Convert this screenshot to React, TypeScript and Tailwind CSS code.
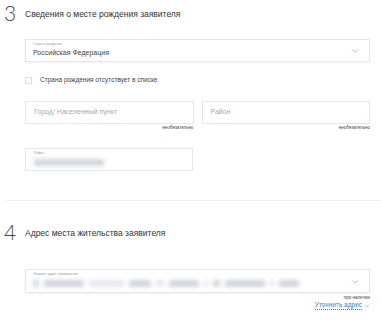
import { ChevronDown } from "lucide-react";

const font = { fontFamily: '"Liberation Sans", Arial, sans-serif' };
const thin = { fontFamily: 'Lato, "DejaVu Sans", sans-serif' };

const Blur = ({ w, shade = "bg-gray-300" }: { w: number; shade?: string }) => (
  <span className={`inline-block h-[7px] blur-[2px] ${shade}`} style={{ width: w }} />
);

export default function App() {
  return (
    <div className="w-[381px] h-[320px] bg-white overflow-hidden text-[#222]" style={font}>
      {/* секция 3 */}
      <div className="flex items-start pt-[2px] pl-[4px]">
        <span className="w-[21px] text-[21px] leading-[21px] font-light text-[#444]" style={thin}>3</span>
        <span className="mt-[7px] text-[8.5px] leading-[10px] text-[#333]">Сведения о месте рождения заявителя</span>
      </div>

      <div className="pl-[25px] pr-[11px] mt-[16px]">
        {/* страна рождения */}
        <div className="relative h-[23px] border border-[#e6e6e6] shadow-[0_1px_2px_rgba(0,0,0,0.06)] pl-[7px] pt-[2px]">
          <div className="text-[3.5px] leading-[5px] text-[#999]">Страна рождения</div>
          <div className="text-[7px] leading-[10px] mt-[1px] text-[#444]">Российская Федерация</div>
          <ChevronDown className="absolute right-[9px] top-[6px] w-[10px] h-[10px] text-[#999]" strokeWidth={1.5} />
        </div>

        {/* чекбокс */}
        <div className="flex items-center mt-[14px] h-[8px]">
          <span className="w-[7px] h-[7px] border border-[#ddd] bg-white" />
          <span className="ml-[8px] text-[6.5px] leading-[8px] text-[#444]">Страна рождения отсутствует в списке</span>
        </div>

        {/* город / район */}
        <div className="grid grid-cols-2 gap-[8px] mt-[17px]">
          <div>
            <div className="h-[23px] border border-[#e6e6e6] flex items-center pl-[8px] text-[7px] text-[#aaa]">
              Город/ Населенный пункт
            </div>
            <div className="text-right text-[4.5px] leading-[6px] mt-[1px] text-[#444]">необязательно</div>
          </div>
          <div>
            <div className="h-[23px] border border-[#e6e6e6] flex items-center pl-[8px] text-[7px] text-[#aaa]">
              Район
            </div>
            <div className="text-right text-[4.5px] leading-[6px] mt-[1px] text-[#444]">необязательно</div>
          </div>
        </div>

        {/* район (заполненный) */}
        <div className="w-[168px] h-[23px] border border-[#e6e6e6] mt-[17px] pl-[8px] pt-[2px]">
          <div className="text-[3.5px] leading-[5px] text-[#999]">Район</div>
          <div className="flex items-center mt-[3px]">
            <Blur w={70} shade="bg-gray-300" />
          </div>
        </div>
      </div>

      <div className="mt-[29px] ml-[5px] h-px bg-[#f0f0f0]" />

      {/* секция 4 */}
      <div className="flex items-start pt-[20px] pl-[4px]">
        <span className="w-[21px] text-[21px] leading-[21px] font-light text-[#444]" style={thin}>4</span>
        <span className="mt-[7px] text-[8.5px] leading-[10px] text-[#333]">Адрес места жительства заявителя</span>
      </div>

      <div className="pl-[25px] pr-[11px] mt-[27px]">
        <div className="relative h-[24px] border border-[#e6e6e6] shadow-[0_1px_2px_rgba(0,0,0,0.06)] pl-[7px] pt-[2px]">
          <div className="text-[3.5px] leading-[5px] text-[#999]">Укажите адрес проживания</div>
          <div className="flex items-center gap-[5px] mt-[3px]">
            <Blur w={6} />
            <Blur w={40} />
            <Blur w={35} shade="bg-gray-200" />
            <Blur w={22} shade="bg-gray-300" />
            <Blur w={8} shade="bg-gray-200" />
            <Blur w={30} />
            <Blur w={4} shade="bg-gray-200" />
            <Blur w={7} />
            <Blur w={40} />
            <Blur w={4} shade="bg-gray-200" />
            <Blur w={20} />
          </div>
          <ChevronDown className="absolute right-[9px] top-[7px] w-[10px] h-[10px] text-[#999]" strokeWidth={1.5} />
        </div>
        <div className="text-right text-[4.5px] leading-[6px] mt-[2px] text-[#444]">при наличии</div>
        <div className="flex justify-end items-center gap-[2px] text-[6.5px] leading-[8px] text-[#3a7fc4]">
          <span className="border-b border-dotted border-[#3a7fc4]">Уточнить адрес</span>
          <ChevronDown className="w-[6px] h-[6px]" strokeWidth={2} />
        </div>
      </div>
    </div>
  );
}
